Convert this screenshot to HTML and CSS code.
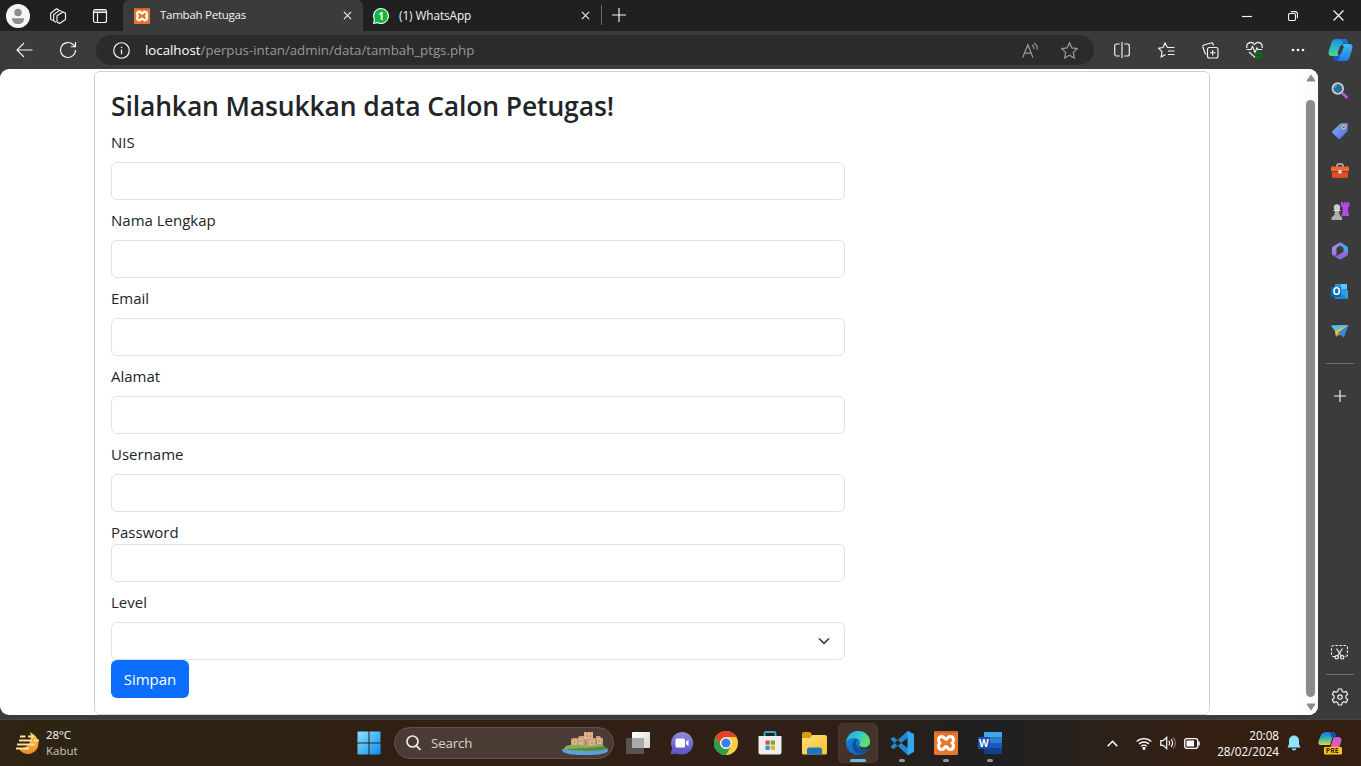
FILE: index.html
```html
<!DOCTYPE html>
<html lang="id">
<head>
<meta charset="utf-8">
<title>Tambah Petugas</title>
<link rel="stylesheet" href="styles.css">
</head>
<body>
<svg class="defs" width="0" height="0" aria-hidden="true">
  <defs>
    <linearGradient id="blue" x1="0" y1="0" x2="1" y2="1"><stop offset="0" stop-color="#8be2ff"/><stop offset="1" stop-color="#0a8ef0"/></linearGradient>
    <linearGradient id="copA" x1="0" y1="0" x2="0" y2="1"><stop offset="0" stop-color="#1a8be8"/><stop offset=".5" stop-color="#2bb9c4"/><stop offset="1" stop-color="#5cd67c"/></linearGradient>
    <linearGradient id="copB" x1="0" y1="0" x2="0" y2="1"><stop offset="0" stop-color="#3fc0f5"/><stop offset="1" stop-color="#1c7be6"/></linearGradient>
    <linearGradient id="preA" x1="0" y1="0" x2="0" y2="1"><stop offset="0" stop-color="#1f6fe6"/><stop offset=".5" stop-color="#2fb7a8"/><stop offset="1" stop-color="#e8d83a"/></linearGradient>
    <linearGradient id="preB" x1="0" y1="0" x2="0" y2="1"><stop offset="0" stop-color="#b25cf0"/><stop offset=".6" stop-color="#ef5aa5"/><stop offset="1" stop-color="#ff9a5a"/></linearGradient>
    <linearGradient id="tag" x1="0" y1="0" x2="1" y2="1"><stop offset="0" stop-color="#8fb0ff"/><stop offset="1" stop-color="#4a66e0"/></linearGradient>
    <linearGradient id="edgeA" x1="0" y1="0" x2="1" y2=".4"><stop offset="0" stop-color="#2aa5e0"/><stop offset=".5" stop-color="#2fc3d6"/><stop offset="1" stop-color="#63e06a"/></linearGradient>
    <linearGradient id="edgeB" x1="0" y1="0" x2="0" y2="1"><stop offset="0" stop-color="#1b8ad8"/><stop offset="1" stop-color="#1268c0"/></linearGradient>
    <linearGradient id="folder" x1="0" y1="0" x2="1" y2="1"><stop offset="0" stop-color="#ffe07a"/><stop offset="1" stop-color="#fbc02d"/></linearGradient>
    <linearGradient id="meet" x1="0" y1="0" x2="0" y2="1"><stop offset="0" stop-color="#8f8cd9"/><stop offset="1" stop-color="#5a52c4"/></linearGradient>
    <linearGradient id="moon" x1="0" y1="0" x2="0" y2="1"><stop offset="0" stop-color="#ffc94d"/><stop offset="1" stop-color="#f08a2a"/></linearGradient>
    <linearGradient id="m365" x1="0" y1="0" x2="1" y2="1"><stop offset="0" stop-color="#b9a2ee"/><stop offset="1" stop-color="#7a4fd0"/></linearGradient>
    <linearGradient id="task" x1="0" y1="0" x2="1" y2="1"><stop offset="0" stop-color="#ffffff"/><stop offset="1" stop-color="#d5d5d5"/></linearGradient>
  </defs>
  <symbol id="xampp" viewBox="0 0 24 24">
    <rect width="24" height="24" rx="1.5" fill="#e8762c"/>
    <path d="M2 1h20" stroke="#b95514" stroke-width="1.2"/>
    <path d="M7.800 5.500C10 5.500 10.500 8.300 12 8.300S14 5.500 16.200 5.500C19.500 5.500 20.500 9.500 18.300 12c2.200 2.500 1.200 6.500-2.100 6.500-2.200 0-2.700-2.800-4.200-2.800s-2 2.800-4.200 2.800C4.500 18.500 3.500 14.500 5.700 12 3.500 9.500 4.500 5.500 7.800 5.500Z" fill="none" stroke="#fff" stroke-width="3.200"/>
  </symbol>
</svg>

<div class="screen">
  <header class="tabbar">
    <div class="tab-tools">
      <svg class="avatar" viewBox="0 0 24 24"><circle cx="12" cy="12" r="12" fill="#f6f6f6"/><circle cx="12" cy="8.500" r="3.700" fill="#8c8c8c"/><path d="M6 14.200h12c0 4-2.500 5.800-6 5.800s-6-1.800-6-5.800Z" fill="#8c8c8c"/></svg>
      <svg class="workspaces line" viewBox="0 0 18 18"><path d="M3.800 13.500 1.700 12.200V6.200l5.800-4.500 2.300 1.200M7 15.300l-2.300-1.400V7.500l5.800-4.200 2.300 1.200"/><path d="m8 8.800 6-3.800 2.500 1.200v6.300l-6 4L8 15Z"/></svg>
      <svg class="vtabs line" viewBox="0 0 16 16"><rect x="1.500" y="1.500" width="13" height="13" rx="2"/><path d="M2 3h12M2 4.500h12M5.500 5v9"/></svg>
    </div>
    <div class="tab active">
      <svg class="favicon" viewBox="0 0 24 24"><use href="#xampp"/></svg>
      <span class="tab-title t-active">Tambah Petugas</span>
      <svg class="x line" viewBox="0 0 10 10"><path d="m1 1 8 8M9 1 1 9"/></svg>
    </div>
    <div class="tab">
      <svg class="favicon" viewBox="0 0 16 16"><path d="M8 0a8 8 0 1 1-3.500 15.200L0 16l.8-4.500A8 8 0 0 1 8 0Z" fill="#fff"/><circle cx="8" cy="8" r="6.900" fill="#12b73d"/><path d="m1.300 14.700.8-4 3 3Z" fill="#12b73d"/><text x="5.200" y="11.600" class="wa-num">1</text></svg>
      <span class="tab-title t-wa">(1) WhatsApp</span>
      <svg class="x line" viewBox="0 0 10 10"><path d="m1 1 8 8M9 1 1 9"/></svg>
    </div>
    <div class="newtab"><svg width="14" height="14" class="line" viewBox="0 0 14 14"><path d="M7 0v14M0 7h14"/></svg></div>
    <div class="winctl">
      <span><svg width="10" height="10" class="line" viewBox="0 0 10 10"><path d="M0 5.500h10"/></svg></span>
      <span><svg width="10" height="10" class="line" viewBox="0 0 10 10"><rect x=".5" y="2.500" width="7" height="7" rx="1.500"/><path d="M2.700.6H7A2.500 2.500 0 0 1 9.500 3v4.300"/></svg></span>
      <span><svg width="11" height="11" class="line" viewBox="0 0 10 10"><path d="m.5.5 9 9M9.500.5l-9 9"/></svg></span>
    </div>
  </header>

  <div class="toolbar">
    <div class="nav"><svg width="17" height="16" class="line" viewBox="0 0 17 16"><path d="M16.500 8H1M8 1 1 8l7 7"/></svg></div>
    <div class="nav"><svg width="18" height="18" class="line" viewBox="0 0 18 18"><path d="M16.500 9a7.500 7.500 0 1 1-2.400-5.500L16.300 5.500M16.500 1v4.700h-4.700"/></svg></div>
    <div class="address">
      <svg class="info line" viewBox="0 0 16 16"><circle cx="8" cy="8" r="7.300"/><path d="M8 7v4.500M8 4.400v1.200"/></svg>
      <span class="url"><b>localhost</b>/perpus-intan/admin/data/tambah_ptgs.php</span>
      <svg class="read line dim" viewBox="0 0 16 16"><path d="M.7 14.500 5.500 2.500l4.800 12M2.400 10.500h6.300M9.300 2.700c1.500.8 2 2 2 3.800M11.200 1c2.300 1.200 3.200 3 3.200 6"/></svg>
      <svg class="star line dim" viewBox="0 0 16 16"><path d="m8 .8 2.200 4.700 5.100.7-3.700 3.600.9 5.200L8 12.500 3.500 15l.9-5.200L.7 6.200l5.100-.7Z"/></svg>
    </div>
    <div class="tool"><svg width="16" height="16" class="line" viewBox="0 0 16 16"><path d="M8 0v16M5.700 2H2.500A1.800 1.800 0 0 0 .7 3.800v8.400A1.800 1.800 0 0 0 2.500 14h3.200M10.300 2h3.200a1.800 1.800 0 0 1 1.800 1.800v8.400a1.800 1.800 0 0 1-1.800 1.800h-3.200"/></svg></div>
    <div class="tool"><svg width="17" height="17" class="line" viewBox="0 0 17 17"><path d="M11.200 5.500H9.400L7 1 5 5.600.7 6.300 4 9.600 3.200 15l4.300-2.500M10 5.500h6.500M10 9h6.500M10 12.500h6.500"/></svg></div>
    <div class="tool"><svg width="17" height="17" class="line" viewBox="0 0 17 17"><rect x="5.500" y="5.500" width="10.500" height="10.500" rx="2"/><path d="M10.700 8v5.500M8 10.700h5.500M11.500 3.500 11 2A1.700 1.700 0 0 0 9 1L2 3A1.700 1.700 0 0 0 .9 5l2 6c.3.800.8 1.100 1.600 1"/></svg></div>
    <div class="tool"><svg width="17" height="18" class="line" viewBox="0 0 17 18"><path d="M1 7C-.5 2 5.500-.5 8.500 3.500 11.500-.5 17.500 2 16 7M.5 8.500H5l1.500-3 2.500 6 2-4.500 1 1.500h4M3 11l5.500 5 2-2"/><circle cx="12.500" cy="14" r="3.800" fill="#13691b" stroke="none"/><path d="m10.900 14 1.200 1.200 2-2.200" stroke="#0b4d12"/></svg></div>
    <div class="tool"><svg width="14" height="4" viewBox="0 0 14 4" fill="#fff"><circle cx="2" cy="2" r="1.300"/><circle cx="7" cy="2" r="1.300"/><circle cx="12" cy="2" r="1.300"/></svg></div>
    <div class="tool copilot"><svg width="25" height="24" viewBox="0 0 25 24"><path d="M12 1h5c2 0 2.500 2 3 5h-4c-2 0-3 1-3.500 3l-2.700 9c-.6 2-2 0-4 0H4c-3 0-4-2-3.200-5l2.500-8C4.200 2 6 1 8 1Z" fill="url(#copA)"/><path d="M13 23H8c-2 0-2.500-2-3-5h4c2 0 3-1 3.500-3l2.700-9c.6-2 2 0 4 0H21c3 0 4 2 3.200 5l-2.500 8c-.900 3-2.700 4-4.700 4Z" fill="url(#copB)"/><path d="M12 8h4l-3 8H9.500Z" fill="#3b3b3b"/><path d="M5 18h4c1.500 0 2.500-.5 3-2l-1 5c-.4 1.500-1.500 2-3 2-2 0-2.500-2-3-5Z" fill="#1756c5"/><path d="M13 1h4c2 0 2.500 2 3 5h-5Z" fill="#1670d0"/></svg></div>
  </div>

  <div class="middle">
    <main class="viewport">
      <div class="page">
        <form class="card">
          <h3 class="heading">Silahkan Masukkan data Calon Petugas!</h3>
          <label>NIS</label><input type="text">
          <label>Nama Lengkap</label><input type="text">
          <label>Email</label><input type="text">
          <label>Alamat</label><input type="text">
          <label>Username</label><input type="text">
          <label class="tight">Password</label><input type="password">
          <label>Level</label>
          <div class="select"><svg width="16" height="16" viewBox="0 0 16 16" fill="none" stroke="#343a40" stroke-width="1.500" stroke-linecap="round" stroke-linejoin="round"><path d="m3.300 5.700 4.700 4.700 4.700-4.700"/></svg></div>
          <button class="btn" type="button">Simpan</button>
        </form>
      </div>
      <div class="scroll">
        <svg width="10" height="8" viewBox="0 0 10 8"><path d="M5 1 9 7H1Z" fill="#8b8b8b" stroke="#8b8b8b" stroke-linejoin="round"/></svg>
        <div class="thumb"></div>
        <svg width="10" height="8" viewBox="0 0 10 8"><path d="M5 7 9 1H1Z" fill="#8b8b8b" stroke="#8b8b8b" stroke-linejoin="round"/></svg>
      </div>
    </main>
    <aside class="side">
      <div class="app"><svg width="18" height="18" viewBox="0 0 18 18"><path d="m11 11 5.500 5" stroke="#bd55e0" stroke-width="3"/><circle cx="6.800" cy="6.500" r="5.300" fill="#276f9c" stroke="#c9cdd0" stroke-width="1.800"/><path d="M3.500 6a3.500 3.500 0 0 1 3-3" stroke="#63b5dc" fill="none"/></svg></div>
      <div class="app"><svg width="18" height="18" viewBox="0 0 18 18"><path d="M9.500 1.500 15.500 1c1 0 1.500.5 1.500 1.500L16.500 9l-7 7.500c-.8.800-1.500.8-2.300 0l-5.500-5.300c-.8-.8-.8-1.500 0-2.300Z" fill="url(#tag)"/><circle cx="12.800" cy="5" r="2.200" fill="#e8d04a"/><circle cx="12.800" cy="5" r="1" fill="#44506e"/></svg></div>
      <div class="app"><svg width="18" height="16" viewBox="0 0 18 16"><path d="M6 4V2.500C6 1.500 6.500 1 7.500 1h3c1 0 1.500.5 1.500 1.500V4" fill="none" stroke="#b9bec2" stroke-width="1.500"/><rect y="3.500" width="18" height="5.500" rx="1" fill="#f06a35"/><path d="M1 8.500h16V14a1 1 0 0 1-1 1H2a1 1 0 0 1-1-1Z" fill="#dc4c25"/><path d="M0 8.500h18" stroke="#9c3015"/><rect x="7.300" y="7" width="3.400" height="3.500" rx="1" fill="#ddd"/></svg></div>
      <div class="app"><svg width="20" height="18" viewBox="0 0 20 18"><path d="M11 0h2v1.500h1.200V0h2v1.500h1.200V0h2v4l-1.500 1.500.5 6 1 2.500h-8l1-2.500.4-6L11 4Z" fill="#b14bea"/><circle cx="7" cy="5.500" r="3.200" fill="#cacaca"/><path d="M5.200 8h3.600l.8 5 2.500 2.500V18H1.500v-2.500L4.400 13Z" fill="#adadad"/><path d="M3.500 8.500h7" stroke="#ddd"/></svg></div>
      <div class="app"><svg width="18" height="18" viewBox="0 0 18 18"><path d="M8 1 2.500 4.200C1.500 4.800 1 5.500 1 6.700v5C1 14 4 14.500 5.500 13V7c0-1 .3-1.500 1.200-2L12 2C10.500.5 9 .5 8 1Z" fill="url(#m365)"/><path d="M9 .5c.5 0 1 .2 1.500.5l5.500 3.200c.7.500 1 1.200 1 2.500v4c0 .8-1 1-1.700.5L12.500 9.500V7c0-1-.5-1.500-1.200-2L8.500 3.700Z" fill="#4aa3e8"/><path d="M3 14.200 8 17c1 .5 1.500.5 2.500 0l5.500-3.200c.8-.5 1-1.300 1-2.300l-4.500-2-3.500 2.500L6 13.500c-1 .8-2 1-3 .7Z" fill="#8f66dd"/></svg></div>
      <div class="app"><svg width="17" height="17" viewBox="0 0 17 17"><path d="M4 1h12v14H4Z" fill="#239ee4"/><path d="M10 1h6v5h-6Z" fill="#5bc8f3"/><path d="m3 7 7 4 7-4v9H4Z" fill="#188dd1"/><path d="m11 11 6-4v9Z" fill="#2f9fdf"/><rect y="4" width="10" height="10" rx="1" fill="#0565b8"/><text x="1.400" y="12.200" class="ico-o">O</text></svg></div>
      <div class="app"><svg width="18" height="14" viewBox="0 0 18 14"><path d="M0 1.500 17.500 1 13 13.500 8 10l-3 3-1-6Z" fill="#3688e5"/><path d="M0 1.500 17.500 1 4 7Z" fill="#55c0e4"/><path d="M17.500 1 4 7l1 5.500 2-4Z" fill="#f6c935"/><path d="m5 12.500 2-4 2.500 2Z" fill="#d98c20"/></svg></div>
      <hr>
      <div class="app plus"><svg width="12" height="12" class="line" viewBox="0 0 12 12"><path d="M6 0v12M0 6h12"/></svg></div>
      <div class="app shot"><svg width="17" height="16" class="line" viewBox="0 0 17 16"><path d="M4 12.500H2.500a2 2 0 0 1-2-2v-7a2 2 0 0 1 2-2h12a2 2 0 0 1 2 2v7a2 2 0 0 1-2 2H13" stroke-dasharray="2.500 1.500"/><path d="m5.500 4.500 5 7.500M11.500 4.500l-5 7.500"/><circle cx="5.800" cy="13.300" r="1.700"/><circle cx="11.200" cy="13.300" r="1.700"/></svg></div>
      <hr class="low">
      <div class="app gear"><svg width="18" height="18" class="line" viewBox="0 0 18 18"><path d="M7.300 1h3.400l.5 2.300 1.500.9 2.300-.8 1.700 3-1.800 1.600v2l1.800 1.600-1.700 3-2.300-.8-1.500.9-.5 2.300H7.300l-.5-2.300-1.500-.9-2.300.8-1.700-3L3.100 10V8L1.300 6.400l1.700-3 2.300.8 1.500-.9Z" stroke-linejoin="round"/><circle cx="9" cy="9" r="2.200"/></svg></div>
    </aside>
  </div>

  <footer class="taskbar">
    <div class="weather">
      <svg width="25" height="24" viewBox="0 0 25 24"><path d="M15 1c5 3 8.500 6 8.500 11.500a10.500 10.500 0 0 1-20 4.500C12 19 18 11 15 1Z" fill="url(#moon)"/><path d="M5 5.500h5.500M13 5.500h6M4 9.500h13M19 9.500h5M2 13.500h18M1 17.500h13" stroke="#ffe19a" stroke-width="1.900"/></svg>
      <div class="wtext"><span class="temp">28°C</span><span class="cond">Kabut</span></div>
    </div>
    <div class="cell"><svg width="24" height="24" viewBox="0 0 24 24"><path d="M1 .5h10.500v11H.5V1ZM12.500.5H23l.5.5v10.500h-11ZM.5 12.500h11v11H1L.5 23ZM12.500 12.500h11V23l-.5.5H12.500Z" fill="url(#blue)"/></svg></div>
    <div class="search">
      <svg width="15" height="16" viewBox="0 0 15 16" fill="none" stroke="#eee" stroke-width="1.700"><circle cx="6.500" cy="6.500" r="5.500"/><path d="m10.500 10.800 4 4.200"/></svg>
      <span class="search-label">Search</span>
      <svg class="castle" width="48" height="25" viewBox="0 0 48 25"><path d="M10 14V8l2-1h4l1 1V6l2-1h4V1h9v6h3V5h4l1 2h2v7l-8 3-22-1Z" fill="#c99c7c"/><path d="M23 1h2v1.500h2V1h2v1.500h1V1h2v7h-9Z" fill="#dfb38d"/><path d="M11 9h5v6h-5ZM18 7h4v8h-4ZM28 9h6v6h-6ZM36 7h4v7h-4Z" fill="#deb491"/><path d="M13.500 10v2M20 9v2M26 4v2M29.500 4v2M31 11v2M35 9v4M38 9v2M24.500 10v4" stroke="#94694f" stroke-width=".8"/><path d="M5 15c8-2 14-1 20 0 6 0 11-2 16-2l5 6-12 3H8l-6-3Z" fill="#82b055"/><path d="M1 18c10 2 30 2 46 0 1 4-5 6-23 6S1 22 1 18Z" fill="#5b9fe0"/><path d="M5 18c14-1 28-1 38-3l4 3c-8 2.500-34 2.500-42 0Z" fill="#558c3a"/></svg>
    </div>
    <div class="cell"><svg width="24" height="22" viewBox="0 0 24 22"><rect x="6" y="0" width="18" height="16" rx=".8" fill="url(#task)"/><rect x="0" y="6" width="18" height="16" rx=".8" fill="#77777799"/><rect x="6" y="6" width="12" height="10" fill="#aaa"/></svg></div>
    <div class="cell"><svg width="24" height="24" viewBox="0 0 24 24"><path d="M12 1a11.300 11.300 0 1 1-4.500 21.700L.5 23l1.800-5.500A11.300 11.300 0 0 1 12 1Z" fill="url(#meet)"/><rect x="5.500" y="7.500" width="9.500" height="9" rx="1.500" fill="#fff"/><path d="m16 11 2.500-2.500v7L16 13Z" fill="#fff"/></svg></div>
    <div class="cell"><svg width="24" height="24" viewBox="0 0 24 24"><circle cx="12" cy="12" r="12" fill="#ffcd40"/><path d="M1.600 6A12 12 0 0 1 22.400 6H12a6 6 0 0 0-5.200 9Z" fill="#e3402f"/><path d="M1.600 6A12 12 0 0 0 12 24l5.200-9A6 6 0 0 1 6.800 15Z" fill="#2aa04f"/><circle cx="12" cy="12" r="5.800" fill="#fff"/><circle cx="12" cy="12" r="4.600" fill="#3d7ee8"/></svg></div>
    <div class="cell"><svg width="24" height="24" viewBox="0 0 24 24"><path d="M6.500 7V2.500C6.500 1.500 7 1 8 1h8c1 0 1.500.5 1.500 1.500V7" fill="none" stroke="#28b0e6" stroke-width="1.800"/><path d="M.5 5h23v16a2.500 2.500 0 0 1-2.500 2.500H3A2.500 2.500 0 0 1 .5 21Z" fill="#eee"/><path d="M7.500 9.500h4.200v4.200H7.500Z" fill="#d8502f"/><path d="M12.700 9.500h4.200v4.200h-4.200Z" fill="#71a82e"/><path d="M7.500 14.700h4.200v4.200H7.500Z" fill="#229adb"/><path d="M12.700 14.700h4.200v4.200h-4.200Z" fill="#eaad1e"/></svg></div>
    <div class="cell"><svg width="25" height="23" viewBox="0 0 25 23"><path d="M0 2a2 2 0 0 1 2-2h6l2 2.500V8H0Z" fill="#d99a16"/><path d="M0 6h8l2.500-3H23a2 2 0 0 1 2 2v16a1.500 1.500 0 0 1-1.500 1.500h-22A1.500 1.500 0 0 1 0 21Z" fill="url(#folder)"/><path d="M5 22.500V18a2.500 2.500 0 0 1 2.500-2.500h10A2.500 2.500 0 0 1 20 18v4.500Z" fill="#1778bd"/></svg></div>
    <div class="cell running current"><svg width="24" height="24" viewBox="0 0 24 24"><circle cx="12" cy="12" r="12" fill="url(#edgeB)"/><path d="M14.500 16.500c2 1.200 5.500 1 8.500-1.500L25 13.500v5h-2.500C19 21 14 19.500 14.500 16.500Z" fill="#0f55a5"/><path d="M.2 11C1 4.500 6 0 12 0c7 0 12 5 12 10.500 0 4-3 6-6.500 6-2.500 0-4.500-1-4.500-2.500 0-1 1-1.500 1-3 0-2-2.500-4-6-4-3.500 0-6.500 1.500-7.800 4Z" fill="url(#edgeA)"/><path d="M8.500 8.500C5 12 6 19 11 22c4 2 9 0 11.500-4-5 2.500-12 .5-12.500-5-.2-2 .5-3.500 2-4.500a6 6 0 0 0-3.500 0Z" fill="#0f4f98"/><path d="M13 13.800c.4 1.800 2.200 2.700 4.500 2.700 2.500 0 4.500-.8 5.700-2.500l1.800 2-2.500 2C18 20 11.500 17.500 13 13.800Z" fill="#443328"/></svg></div>
    <div class="cell running"><svg width="24" height="24" viewBox="0 0 24 24"><path d="m.5 8.300 2-2H4L20 19v4.500L17.500 24ZM.5 15.700l2 2H4L20 5V.5L17.500 0Z" fill="#1f8ad2"/><path d="M17.500 0 24 3v18l-6.500 3V0Z" fill="#34a7ee"/></svg></div>
    <div class="cell running"><svg width="24" height="24" viewBox="0 0 24 24"><use href="#xampp"/></svg></div>
    <div class="cell running"><svg width="24" height="22" viewBox="0 0 24 22"><path d="M6 0h18v5.500H6Z" fill="#41a5ee"/><path d="M6 5.500h18V11H6Z" fill="#2b7cd3"/><path d="M6 11h18v5.500H6Z" fill="#185abd"/><path d="M6 16.500h18V22H6Z" fill="#103f91"/><rect y="5" width="12" height="12" rx="1" fill="#1950aa"/><text x="1" y="14.700" class="ico-w">W</text></svg></div>

    <div class="tray">
      <span class="up"><svg width="11" height="7" viewBox="0 0 11 7" fill="none" stroke="#fff" stroke-width="1.600"><path d="M.7 6.200 5.500 1.300l4.800 4.900"/></svg></span>
      <span><svg width="16" height="13" viewBox="0 0 16 13" fill="none" stroke="#fff" stroke-width="1.300"><path d="M.7 4.500a10.500 10.500 0 0 1 14.600 0M3 7a7.200 7.200 0 0 1 10 0M5.200 9.400a4 4 0 0 1 5.600 0"/><circle cx="8" cy="11.300" r="1" fill="#fff"/></svg></span>
      <span><svg width="16" height="14" viewBox="0 0 16 14" fill="none" stroke="#fff" stroke-width="1.200"><path d="M.8 4.700h2.400l3.500-3.400v11.400L3.200 9.300H.8ZM8.800 4.800c1 1.300 1 3.100 0 4.400M11 3c2 2.500 2 5.500 0 8"/><path d="M13.200 1.500c2.700 3.300 2.700 7.700 0 11" stroke="#777"/></svg></span>
      <span><svg width="16" height="11" viewBox="0 0 16 11"><rect x=".7" y=".7" width="13" height="9.600" rx="2" fill="none" stroke="#fff" stroke-width="1.300"/><rect x="2.500" y="2.500" width="7.500" height="6" fill="#fff"/><path d="M15 3.500v4" stroke="#fff" stroke-width="1.500"/></svg></span>
      <div class="clock"><span class="time">20:08</span><span class="date">28/02/2024</span></div>
      <svg class="bell" width="14" height="16" viewBox="0 0 14 16"><path d="M7 .5A5 5 0 0 1 12 5.500V9l1.500 3.500H.5L2 9V5.500A5 5 0 0 1 7 .5ZM4.700 13.500h4.600C9 16 5 16 4.700 13.500Z" fill="#8fe3ff"/></svg>
      <svg class="pre" width="25" height="24" viewBox="0 0 25 24"><path d="M9 1h6c2 0 2.500 2 3 4-2 0-3 .5-4 3l-2 6H3C.5 14 0 12 .7 9.500L3 4c.8-2 3-3 6-3Z" fill="url(#preA)"/><path d="M16 6h4c3 0 4 2 3.200 4.500L20 20H9c2 0 2.500-1 3-3l3-9Z" fill="url(#preB)"/><path d="M12 1h3c2 0 2.500 2 3 4-3 0-4 1-4.500 2Z" fill="#174bb5"/><rect x="6" y="16" width="18" height="7.500" rx="1.200" fill="#fcc51b"/><text x="7.800" y="22.200" class="ico-pre">PRE</text></svg>
    </div>
  </footer>
</div>
</body>
</html>
```
FILE: styles.css
```css
* { box-sizing: border-box; }
body {
  margin: 0;
  overflow: hidden;
  font-family: "Open Sans", "Noto Sans", sans-serif;
}
svg { flex: none; display: block; }
.defs { position: absolute; }
.line { fill: none; stroke: #f4f4f4; stroke-width: 1.15; }
.line.dim { stroke: #9a9a9a; }
.screen {
  width: 1361px;
  height: 766px;
  display: flex;
  flex-direction: column;
  background: #3b3b3b;
}

/* Tab strip */
.tabbar { height: 31px; flex: none; display: flex; background: #202020; }
.tab-tools { width: 123px; display: flex; align-items: center; padding-left: 6px; }
.avatar { width: 24px; height: 24px; margin-right: 19px; }
.workspaces { width: 18px; height: 18px; margin-right: 25px; }
.vtabs { width: 16px; height: 16px; }
.tab {
  width: 238px;
  display: flex;
  align-items: center;
  padding: 0 11px 0 10px;
  color: #f4f4f4;
  font-size: 12px;
}
.tab.active { width: 240px; background: #3b3b3b; padding-left: 11px; padding-right: 11px; border-radius: 6px 6px 0 0; }
.favicon { width: 16px; height: 16px; margin-right: 10px; }
.wa-num { font: bold 10px "Open Sans", sans-serif; fill: #fff; }
.tab-title { flex: 1; line-height: 16px; padding-bottom: 1px; white-space: nowrap; }
.t-active { font-size: 11.500px; letter-spacing: -.25px; }
.t-wa { font-size: 11.800px; letter-spacing: -.08px; }
.x { width: 9px; height: 9px; }
.newtab { display: flex; align-items: center; width: 34px; height: 20px; margin-top: 5px; border-left: 1px solid #666; padding-left: 10px; }
.winctl { margin-left: auto; display: flex; }
.winctl span { width: 46px; display: flex; align-items: center; justify-content: center; }
.winctl span:last-child { width: 45px; }

/* Address toolbar */
.toolbar { height: 38px; flex: none; display: flex; align-items: center; padding-left: 2px; }
.nav { width: 44px; display: flex; justify-content: center; }
.address {
  width: 998px;
  height: 30px;
  margin: 0 6px;
  border-radius: 15px;
  background: #2b2b2b;
  display: flex;
  align-items: center;
  padding: 0 16px 0 17px;
}
.info { width: 17px; height: 17px; margin-right: 15px; }
.url { flex: 1; color: #979797; font-size: 13.300px; letter-spacing: -.02px; line-height: 20px; }
.url b { color: #fff; font-weight: 400; }
.read { width: 17px; height: 17px; margin-right: 22px; }
.star { width: 17px; height: 17px; }
.tool { width: 44px; display: flex; justify-content: center; }
.tool.copilot { width: 41px; }

/* Page area */
.middle { height: 650px; flex: none; display: flex; }
.viewport {
  width: 1318px;
  height: 646px;
  background: #fff;
  border-radius: 9px;
  overflow: hidden;
  display: flex;
}
.page { flex: 1; padding: 2px 0 0 94px; }
.card {
  width: 1116px;
  height: 644px;
  border: 1px solid #d0d1d2;
  border-radius: 6px;
  padding: 18px 16px 0;
  display: flex;
  flex-direction: column;
  align-items: flex-start;
  color: #212529;
}
.heading { margin: 0 0 8px; height: 32px; font-size: 26.500px; line-height: 33px; font-weight: 600; letter-spacing: -.14px; white-space: nowrap; }
label { font-size: 15px; line-height: 24px; margin-bottom: 8px; }
label.tight { margin-bottom: 0; }
input, .select {
  width: 734px;
  height: 38px;
  flex: none;
  border: 1px solid #dee2e6;
  border-radius: 6px;
  background: #fff;
  margin: 0 0 8px;
}
.select { margin: 0; display: flex; align-items: center; justify-content: flex-end; padding-right: 12px; }
.btn {
  width: 78px;
  height: 38px;
  border: 0;
  padding: 0;
  border-radius: 6px;
  background: #0d6efd;
  color: #fff;
  font: 15px/24px "Open Sans", "Noto Sans", sans-serif;
}
.scroll { width: 15px; background: #fcfcfc; display: flex; flex-direction: column; align-items: center; padding: 5px 0 4px; }
.thumb { width: 9px; height: 597px; margin: 18px 0 6px; background: #8b8b8b; border-radius: 5px; flex: none; }

/* Edge sidebar */
.side { flex: 1; display: flex; flex-direction: column; align-items: center; padding: 2px 0 0; }
.app { height: 40px; flex: none; display: flex; align-items: center; justify-content: center; }
.side hr { width: 28px; height: 1px; flex: none; border: 0; margin: 12px 0; background: #707070; }
.app.plus { margin-top: -.5px; }
.app.shot { height: 30px; margin-top: auto; }
.side hr.low { margin: 7px 0; }
.app.gear { height: 30px; margin-bottom: 7px; }

/* Taskbar */
.taskbar {
  height: 47px;
  flex: none;
  display: flex;
  align-items: center;
  border-top: 1px solid #4a443e;
  background: linear-gradient(90deg, #2e2515 0, #2d2214 18%, #321f14 30%, #302015 60%, #202020 71%, #202020 74%, #2a211a 80%, #342013 88%, #321f12 100%);
}
.weather { width: 347px; padding-left: 15px; display: flex; align-items: center; gap: 6px; }
.wtext { display: flex; flex-direction: column; font-size: 12px; line-height: 16px; }
.temp { color: #fff; font-size: 11.500px; letter-spacing: -.1px; }
.cond { color: #c9c6c1; font-size: 11.500px; }
.cell { width: 40px; height: 40px; margin: 0 2px; flex: none; display: flex; align-items: center; justify-content: center; }
.running { position: relative; }
.running::after {
  content: "";
  position: absolute;
  left: 17px;
  bottom: 1px;
  width: 6px;
  height: 3px;
  border-radius: 2px;
  background: #9b9792;
}
.current { background: #443328; border: 1px solid #4d3b30; border-radius: 5px; }
.current::after { left: 11px; bottom: 0; width: 16px; background: #60bdf0; }
.search {
  width: 220px;
  height: 32px;
  margin: 0 2px 0 3px;
  flex: none;
  border: 1px solid #62544b;
  border-radius: 16px;
  background: #4a3c34;
  display: flex;
  align-items: center;
  padding: 0 4px 0 11px;
}
.search-label { color: #d8d4d0; font-size: 13.300px; margin-left: 10px; letter-spacing: -.15px; }
.castle { margin-left: auto; }
.tray { margin-left: auto; display: flex; align-items: center; padding-right: 18px; }
.tray > span { width: 24px; display: flex; justify-content: center; }
.tray > .up { margin-right: 8px; }
.clock { width: 75px; display: flex; flex-direction: column; align-items: flex-end; color: #fff; font-size: 11.700px; line-height: 16px; letter-spacing: -.02px; }
.bell { margin: 0 17px 0 8px; }
.ico-o { font: bold 10px "Open Sans", sans-serif; fill: #fff; }
.ico-w { font: bold 10px "Open Sans", sans-serif; fill: #fff; }
.ico-pre { font: bold 7px "Open Sans", sans-serif; fill: #332400; }
```
